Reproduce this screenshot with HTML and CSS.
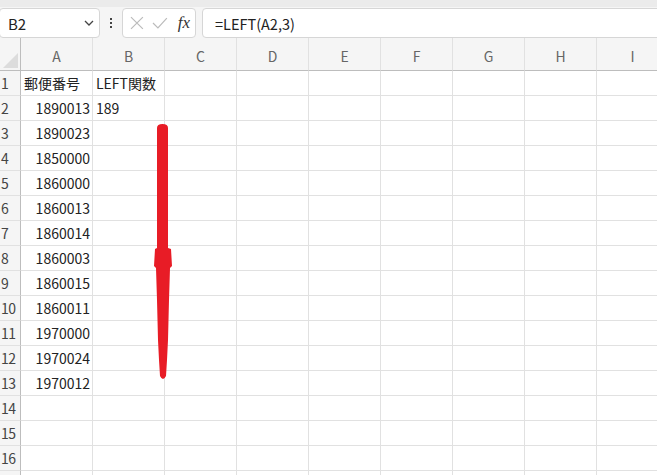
FILE: index.html
```html
<!DOCTYPE html>
<html lang="ja">
    <head>
        <title>Book1</title>
        <meta charset="utf-8" />
        <link rel="stylesheet" href="styles.css">
    </head>
    <body>
        <div id="toolbar">
            <div class="box namebox">
                <span>B2</span>
                <svg class="chev" width="10" height="6" viewBox="0 0 10 6"><path d="M1 1 L5 5 L9 1" fill="none" stroke="#444" stroke-width="1.3"/></svg>
            </div>
            <div class="dots"><i></i><i></i><i></i></div>
            <div class="box fxbox">
                <svg width="14" height="14" viewBox="0 0 14 14"><path d="M1 1 L13 13 M13 1 L1 13" stroke="#bbb" stroke-width="1.2"/></svg>
                <svg width="16" height="14" viewBox="0 0 16 14"><path d="M1 7 L6 12 L15 2" fill="none" stroke="#bbb" stroke-width="1.2"/></svg>
                <span class="fx">fx</span>
            </div>
            <div class="box formula">=LEFT(A2,3)</div>
        </div>
        <div id="sheet"></div>
        <svg id="mark" width="30" height="270" viewBox="0 0 30 270">
            <path d="M7 8 Q7 4 12.5 4 Q18 4 18 8 L18 128 L21 129 L22 146 L20 148 L19 180 L18 220 L17 240 L16 256 Q13 262 10 256 L9 240 L8 220 L7 180 L6 148 L4 146 L5 129 L7 128 Z" fill="#e81c26"/>
        </svg>
        <script>
            "use strict";

            (function () {
                var cols = ['A', 'B', 'C', 'D', 'E', 'F', 'G', 'H', 'I'];
                var data = {
                    1: ['郵便番号', 'LEFT関数'],
                    2: ['1890013', '189'],
                    3: ['1890023'], 4: ['1850000'], 5: ['1860000'],
                    6: ['1860013'], 7: ['1860014'], 8: ['1860003'],
                    9: ['1860015'], 10: ['1860011'], 11: ['1970000'],
                    12: ['1970024'], 13: ['1970012']
                };
                var html = '<div class="corner"><b></b></div>';
                cols.forEach(function (c) {
                    html += '<div class="colhead">' + c + '</div>';
                });
                for (var r = 1; r <= 16; r++) {
                    html += '<div class="rowhead">' + r + '</div>';
                    var row = data[r] || [];
                    cols.forEach(function (c, i) {
                        var v = row[i] || '';
                        var num = /^\d+$/.test(v) && i === 0;
                        html += '<div class="cell' + (num ? ' num' : '') + '">' + v + '</div>';
                    });
                }
                html += '<div class="rowhead"></div>';
                cols.forEach(function () {
                    html += '<div class="cell"></div>';
                });
                document.getElementById('sheet').innerHTML = html;
            })();
        </script>
    </body>
</html>
```

FILE: styles.css
```css
html, body {
    margin: 0px;
    padding: 0px;
    background: white;
    font-family: "Noto Sans CJK JP", "Noto Sans", sans-serif;
    overflow: hidden;
}
#toolbar {
    display: flex;
    align-items: center;
    height: 38px;
    box-sizing: border-box;
    background: #f5f5f5;
    border-top: 7px solid #ebebeb;
    padding-top: 1px;
}
.box {
    display: flex;
    align-items: center;
    box-sizing: border-box;
    height: 30px;
    background: white;
    border: 1px solid #d6d6d6;
    border-radius: 4px;
}
.namebox {
    width: 101px;
    margin-left: -1px;
    padding: 0 5px 0 8px;
    justify-content: space-between;
    font-size: 15px;
    color: #222;
}
.dots {
    display: flex;
    flex-direction: column;
    gap: 2px;
    margin: 0 10px 0 10px;
}
.dots i {
    display: block;
    width: 2px;
    height: 2px;
    background: #444;
}
.fxbox {
    width: 74px;
    padding: 0 5px 0 7px;
    gap: 8px;
}
.fx {
    font-family: "Liberation Serif", serif;
    font-style: italic;
    font-size: 17px;
    color: #333;
    margin-left: 2px;
}
.formula {
    flex: 1;
    margin-left: 6px;
    margin-right: -6px;
    padding-left: 12px;
    font-size: 14.5px;
    color: #222;
}
#sheet {
    display: grid;
    grid-template-columns: 21px repeat(9, 72px);
    grid-template-rows: 33px;
    grid-auto-rows: 25px;
    font-size: 14px;
}
#sheet div {
    box-sizing: border-box;
    border-right: 1px solid #e1e1e1;
    border-bottom: 1px solid #e1e1e1;
    overflow: hidden;
    white-space: nowrap;
}
.corner, .colhead {
    background: #f5f5f5;
    border-bottom-color: #bdbdbd !important;
}
.corner {
    position: relative;
    border-right-color: #bdbdbd !important;
}
.corner b {
    position: absolute;
    right: 2px;
    bottom: 2px;
    width: 0;
    height: 0;
    border-left: 15px solid transparent;
    border-bottom: 15px solid #dcdcdc;
}
.colhead {
    display: flex;
    align-items: center;
    justify-content: center;
    color: #666;
    padding-top: 4px;
}
.rowhead {
    background: #f5f5f5;
    border-right-color: #bdbdbd !important;
    color: #444;
    padding-left: 1px;
    line-height: 25px;
    font-size: 14px;
    letter-spacing: -0.5px;
}
.cell {
    color: #222;
    line-height: 24px;
    padding: 0 2px 0 3px;
}
.num {
    text-align: right;
}
#mark {
    position: absolute;
    left: 150px;
    top: 120px;
}
```
